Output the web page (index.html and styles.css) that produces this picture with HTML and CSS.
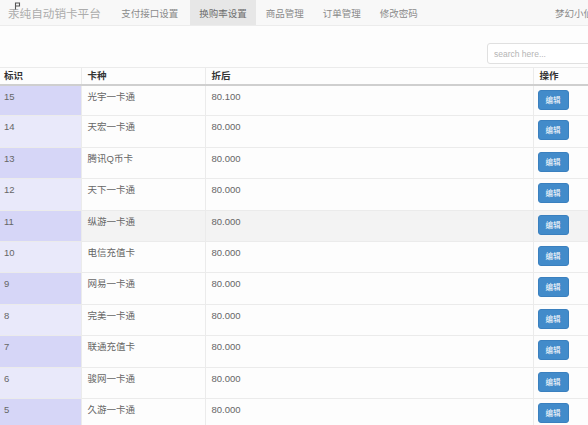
FILE: index.html
```html
<!DOCTYPE html>
<html lang="zh-CN">
<head>
<meta charset="utf-8">
<title>汞纯自动销卡平台</title>
<link rel="stylesheet" href="styles.css">
</head>
<body>
<div class="page">
  <nav class="navbar">
    <a class="brand">汞纯自动销卡平台<svg class="brand-mark" width="7" height="8" viewBox="0 0 7 8"><path d="M1.5 7.5V1h4v3h-4" fill="none" stroke="#555" stroke-width="1.1"/></svg></a>
    <ul class="nav">
      <li>支付接口设置</li>
      <li class="active">换购率设置</li>
      <li>商品管理</li>
      <li>订单管理</li>
      <li>修改密码</li>
    </ul>
    <div class="user">梦幻小仙子</div>
  </nav>
  <div class="toolbar">
    <input class="search" type="text" placeholder="search here...">
  </div>
  <table class="grid">
    <colgroup>
      <col class="c-id"><col class="c-name"><col class="c-rate"><col class="c-op">
    </colgroup>
    <thead>
      <tr><th>标识</th><th>卡种</th><th>折后</th><th>操作</th></tr>
    </thead>
    <tbody>
      <tr class="odd"><td>15</td><td>光宇一卡通</td><td>80.100</td><td><button class="btn">编辑</button></td></tr>
      <tr class="even"><td>14</td><td>天宏一卡通</td><td>80.000</td><td><button class="btn">编辑</button></td></tr>
      <tr class="odd"><td>13</td><td>腾讯Q币卡</td><td>80.000</td><td><button class="btn">编辑</button></td></tr>
      <tr class="even"><td>12</td><td>天下一卡通</td><td>80.000</td><td><button class="btn">编辑</button></td></tr>
      <tr class="odd hover"><td>11</td><td>纵游一卡通</td><td>80.000</td><td><button class="btn">编辑</button></td></tr>
      <tr class="even"><td>10</td><td>电信充值卡</td><td>80.000</td><td><button class="btn">编辑</button></td></tr>
      <tr class="odd"><td>9</td><td>网易一卡通</td><td>80.000</td><td><button class="btn">编辑</button></td></tr>
      <tr class="even"><td>8</td><td>完美一卡通</td><td>80.000</td><td><button class="btn">编辑</button></td></tr>
      <tr class="odd"><td>7</td><td>联通充值卡</td><td>80.000</td><td><button class="btn">编辑</button></td></tr>
      <tr class="even"><td>6</td><td>骏网一卡通</td><td>80.000</td><td><button class="btn">编辑</button></td></tr>
      <tr class="odd"><td>5</td><td>久游一卡通</td><td>80.000</td><td><button class="btn">编辑</button></td></tr>
    </tbody>
  </table>
</div>
</body>
</html>
```

FILE: styles.css
```css
html, body {
  margin: 0;
  padding: 0;
  background: #fdfdfd;
  overflow: hidden;
}
body {
  font-family: "Liberation Sans", "Noto Sans CJK SC", sans-serif;
  font-size: 9.5px;
  color: #666;
}
.page {
  width: 640px;
}
.navbar {
  display: flex;
  align-items: stretch;
  height: 26px;
  background: #f8f8f8;
  border-bottom: 1px solid #ececec;
  box-sizing: border-box;
}
.brand {
  position: relative;
  display: flex;
  align-items: center;
  padding: 0 10px 0 8px;
  font-size: 11.6px;
  color: #acacac;
  white-space: nowrap;
}
.brand-mark {
  position: absolute;
  left: 14px;
  top: 2px;
}
.nav {
  display: flex;
  margin: 0;
  padding: 0;
  list-style: none;
}
.nav li {
  display: flex;
  align-items: center;
  padding: 0 9.5px;
  color: #8a8a8a;
  white-space: nowrap;
}
.nav li:first-child {
  margin-left: 1px;
}
.nav li.active {
  background: #e7e7e7;
  color: #6e6e6e;
  margin-left: 2px;
}
.user {
  margin-left: auto;
  width: 85px;
  display: flex;
  align-items: center;
  color: #8a8a8a;
  white-space: nowrap;
}
.toolbar {
  display: flex;
  justify-content: flex-end;
  padding: 17px 0 4px;
}
.search {
  width: 154px;
  height: 21px;
  box-sizing: border-box;
  border: 1px solid #e0e0e0;
  border-radius: 3px;
  background: #fff;
  padding: 0 6px;
  font-family: "Liberation Sans", sans-serif;
  font-size: 8.5px;
  color: #666;
  margin-right: -1px;
}
.search::placeholder {
  color: #b5b5b5;
}
.grid {
  width: 640px;
  border-collapse: collapse;
  table-layout: fixed;
  margin-top: -1px;
  margin-left: -1px;
}
.c-id { width: 82px; }
.c-name { width: 124px; }
.c-rate { width: 328px; }
.grid th, .grid td {
  border: 1px solid #ebebeb;
  text-align: left;
  vertical-align: top;
  line-height: 14px;
  padding: 4px 6px 0;
}
.grid th:first-child, .grid td:first-child {
  padding-left: 5px;
  border-left: none;
}
.grid thead tr {
  height: 17px;
}
.grid th {
  padding-top: 1px;
  color: #333;
  font-weight: bold;
  border-bottom: 2px solid #cfcfcf;
}
.grid tbody tr {
  height: 31.4px;
}
.grid td:last-child {
  padding-left: 4px;
}
.odd td:first-child { background: #d6d6f7; }
.even td:first-child { background: #e9e9fa; }
.hover td { background: #f3f3f3; }
.hover td:first-child { background: #d6d6f7; }
.btn {
  display: block;
  width: 31px;
  height: 20px;
  padding: 0;
  border: 1px solid #3a80bf;
  border-radius: 3px;
  background: #428bca;
  color: #fff;
  font-family: "Noto Sans CJK SC", sans-serif;
  font-size: 7.5px;
  line-height: 18px;
  text-align: center;
}
```
